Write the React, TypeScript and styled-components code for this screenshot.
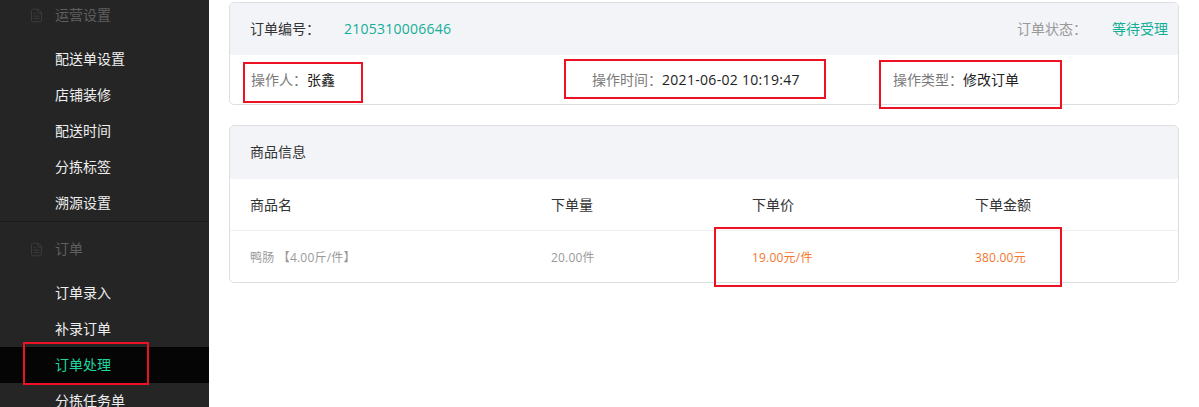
import React from 'react';
import styled, { createGlobalStyle } from 'styled-components';
import { FileText } from 'lucide-react';

const Global = createGlobalStyle`
  html, body { margin: 0; padding: 0; background: #fff; overflow: hidden; }
  body { font-family: "Open Sans", "Noto Sans CJK SC", sans-serif; font-size: 14px; }
`;

const Page = styled.div`
  position: relative;
  display: flex;
  width: 1199px;
  height: 407px;
  overflow: hidden;
`;

const Sidebar = styled.nav`
  width: 209px;
  flex: none;
  background: #252525;
  margin-top: -12px;
  height: 440px;
`;

const Section = styled.section<{ $divided?: boolean }>`
  padding-top: 9px;
  border-bottom: ${p => (p.$divided ? '1px solid #1b1b1b' : 'none')};
`;

const GroupTitle = styled.div`
  display: flex;
  align-items: center;
  height: 36px;
  margin-bottom: 8px;
  padding-left: 29px;
  color: #5f5f5f;
  line-height: 36px;
  svg { width: 15px; height: 15px; color: #3d3d3d; margin-right: 11px; flex: none; }
`;

const MenuItem = styled.div<{ $active?: boolean }>`
  height: 36px;
  line-height: 36px;
  padding-left: 55px;
  color: ${p => (p.$active ? '#1ed79f' : '#eeeeee')};
  background: ${p => (p.$active ? '#050505' : 'transparent')};
`;

const Main = styled.main`
  flex: none;
  width: 990px;
  padding: 2px 0 0 20px;
  box-sizing: border-box;
  display: flex;
  flex-direction: column;
  gap: 20px;
`;

const Card = styled.div`
  width: 950px;
  box-sizing: border-box;
  border: 1px solid #dcdee2;
  border-radius: 5px;
  overflow: hidden;
  background: #fff;
`;

const CardHeader = styled.header<{ $h: number; $lift: number }>`
  height: ${p => p.$h}px;
  box-sizing: border-box;
  background: #f3f4f8;
  display: flex;
  align-items: center;
  padding: 0 10px ${p => p.$lift}px 20px;
  color: #333;
  font-size: 14px;
`;

const OrderLabel = styled.span`
  color: #333;
  width: 94px;
`;

const OrderNo = styled.span`
  color: #14ae96;
  font-size: 14px;
  letter-spacing: 0.25px;
`;

const StatusLabel = styled.span`
  margin-left: auto;
  color: #999;
  width: 95px;
`;

const StatusValue = styled.span`
  color: #14ae96;
`;

const InfoRow = styled.div`
  height: 49px;
  display: grid;
  grid-template-columns: 341px 301px 1fr;
  padding-left: 21px;
  align-items: start;
`;

const InfoItem = styled.div`
  color: #7a7a7a;
  line-height: 50px;
  b { font-weight: 400; color: #222; }
`;

const DateValue = styled.b`
  letter-spacing: 0.3px;
`;

const TableRow = styled.div<{ $head?: boolean }>`
  height: 51px;
  box-sizing: content-box;
  display: grid;
  grid-template-columns: 301px 201px 223px 1fr;
  padding-left: 20px;
  align-items: center;
  font-size: ${p => (p.$head ? 14 : 12)}px;
  letter-spacing: ${p => (p.$head ? 0 : 0.2)}px;
  color: ${p => (p.$head ? '#333' : '#999')};
  border-bottom: ${p => (p.$head ? '1px solid #f1f1f3' : 'none')};
  & > span { position: relative; top: ${p => (p.$head ? -1 : 0)}px; }
`;

const Price = styled.span`
  color: #f5762e;
`;

const Marker = styled.div<{ $x: number; $y: number; $w: number; $h: number }>`
  position: absolute;
  left: ${p => p.$x}px;
  top: ${p => p.$y}px;
  width: ${p => p.$w}px;
  height: ${p => p.$h}px;
  box-sizing: border-box;
  border: 2px solid #ec1224;
  pointer-events: none;
`;

export default function App() {
  return (
    <>
      <Global />
      <Page>
        <Sidebar>
          <Section $divided>
            <GroupTitle><FileText strokeWidth={1.5} />运营设置</GroupTitle>
            <MenuItem>配送单设置</MenuItem>
            <MenuItem>店铺装修</MenuItem>
            <MenuItem>配送时间</MenuItem>
            <MenuItem>分拣标签</MenuItem>
            <MenuItem>溯源设置</MenuItem>
          </Section>
          <Section>
            <GroupTitle><FileText strokeWidth={1.5} />订单</GroupTitle>
            <MenuItem>订单录入</MenuItem>
            <MenuItem>补录订单</MenuItem>
            <MenuItem $active>订单处理</MenuItem>
            <MenuItem>分拣任务单</MenuItem>
          </Section>
        </Sidebar>
        <Main>
          <Card>
            <CardHeader $h={52} $lift={2}>
              <OrderLabel>订单编号：</OrderLabel>
              <OrderNo>2105310006646</OrderNo>
              <StatusLabel>订单状态：</StatusLabel>
              <StatusValue>等待受理</StatusValue>
            </CardHeader>
            <InfoRow>
              <InfoItem>操作人：<b>张鑫</b></InfoItem>
              <InfoItem>操作时间：<DateValue>2021-06-02 10:19:47</DateValue></InfoItem>
              <InfoItem>操作类型：<b>修改订单</b></InfoItem>
            </InfoRow>
          </Card>
          <Card>
            <CardHeader $h={53} $lift={3}>商品信息</CardHeader>
            <TableRow $head>
              <span>商品名</span>
              <span>下单量</span>
              <span>下单价</span>
              <span>下单金额</span>
            </TableRow>
            <TableRow>
              <span>鸭肠 【4.00斤/件】</span>
              <span>20.00件</span>
              <Price>19.00元/件</Price>
              <Price>380.00元</Price>
            </TableRow>
          </Card>
        </Main>
        <Marker $x={243} $y={62} $w={120} $h={41} />
        <Marker $x={564} $y={59} $w={262} $h={40} />
        <Marker $x={879} $y={60} $w={183} $h={49} />
        <Marker $x={714} $y={227} $w={348} $h={60} />
        <Marker $x={23} $y={342} $w={126} $h={43} />
      </Page>
    </>
  );
}
